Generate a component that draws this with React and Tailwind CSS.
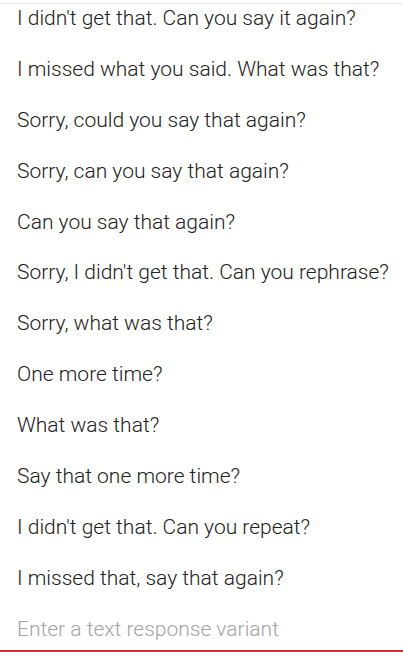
import React from "react";

const items = [
  "I didn't get that. Can you say it again?",
  "I missed what you said. What was that?",
  "Sorry, could you say that again?",
  "Sorry, can you say that again?",
  "Can you say that again?",
  "Sorry, I didn't get that. Can you rephrase?",
  "Sorry, what was that?",
  "One more time?",
  "What was that?",
  "Say that one more time?",
  "I didn't get that. Can you repeat?",
  "I missed that, say that again?",
];

export default function App() {
  return (
    <div
      className="h-[652px] w-full overflow-hidden bg-white"
      style={{ fontFamily: "Roboto, 'Noto Sans', sans-serif" }}
    >
      <div className="mt-[3px] flex h-[649px] flex-col border-t border-[#e0e0e0] pt-[2px]">
        {items.map((t, i) => (
          <div key={i} className="h-[50.9px] shrink-0 pl-[17px]">
            <div className="whitespace-nowrap text-[21px] font-light leading-[24px] text-[#212121]">{t}</div>
          </div>
        ))}
        <div className="flex flex-1 flex-col border-b-2 border-[#d32f2f] pl-[17px]">
          <input
            className="h-[24px] w-full bg-transparent text-[21px] font-light leading-[24px] text-[#212121] outline-none placeholder:text-[#a3a3a3]"
            placeholder="Enter a text response variant"
          />
        </div>
      </div>
    </div>
  );
}
